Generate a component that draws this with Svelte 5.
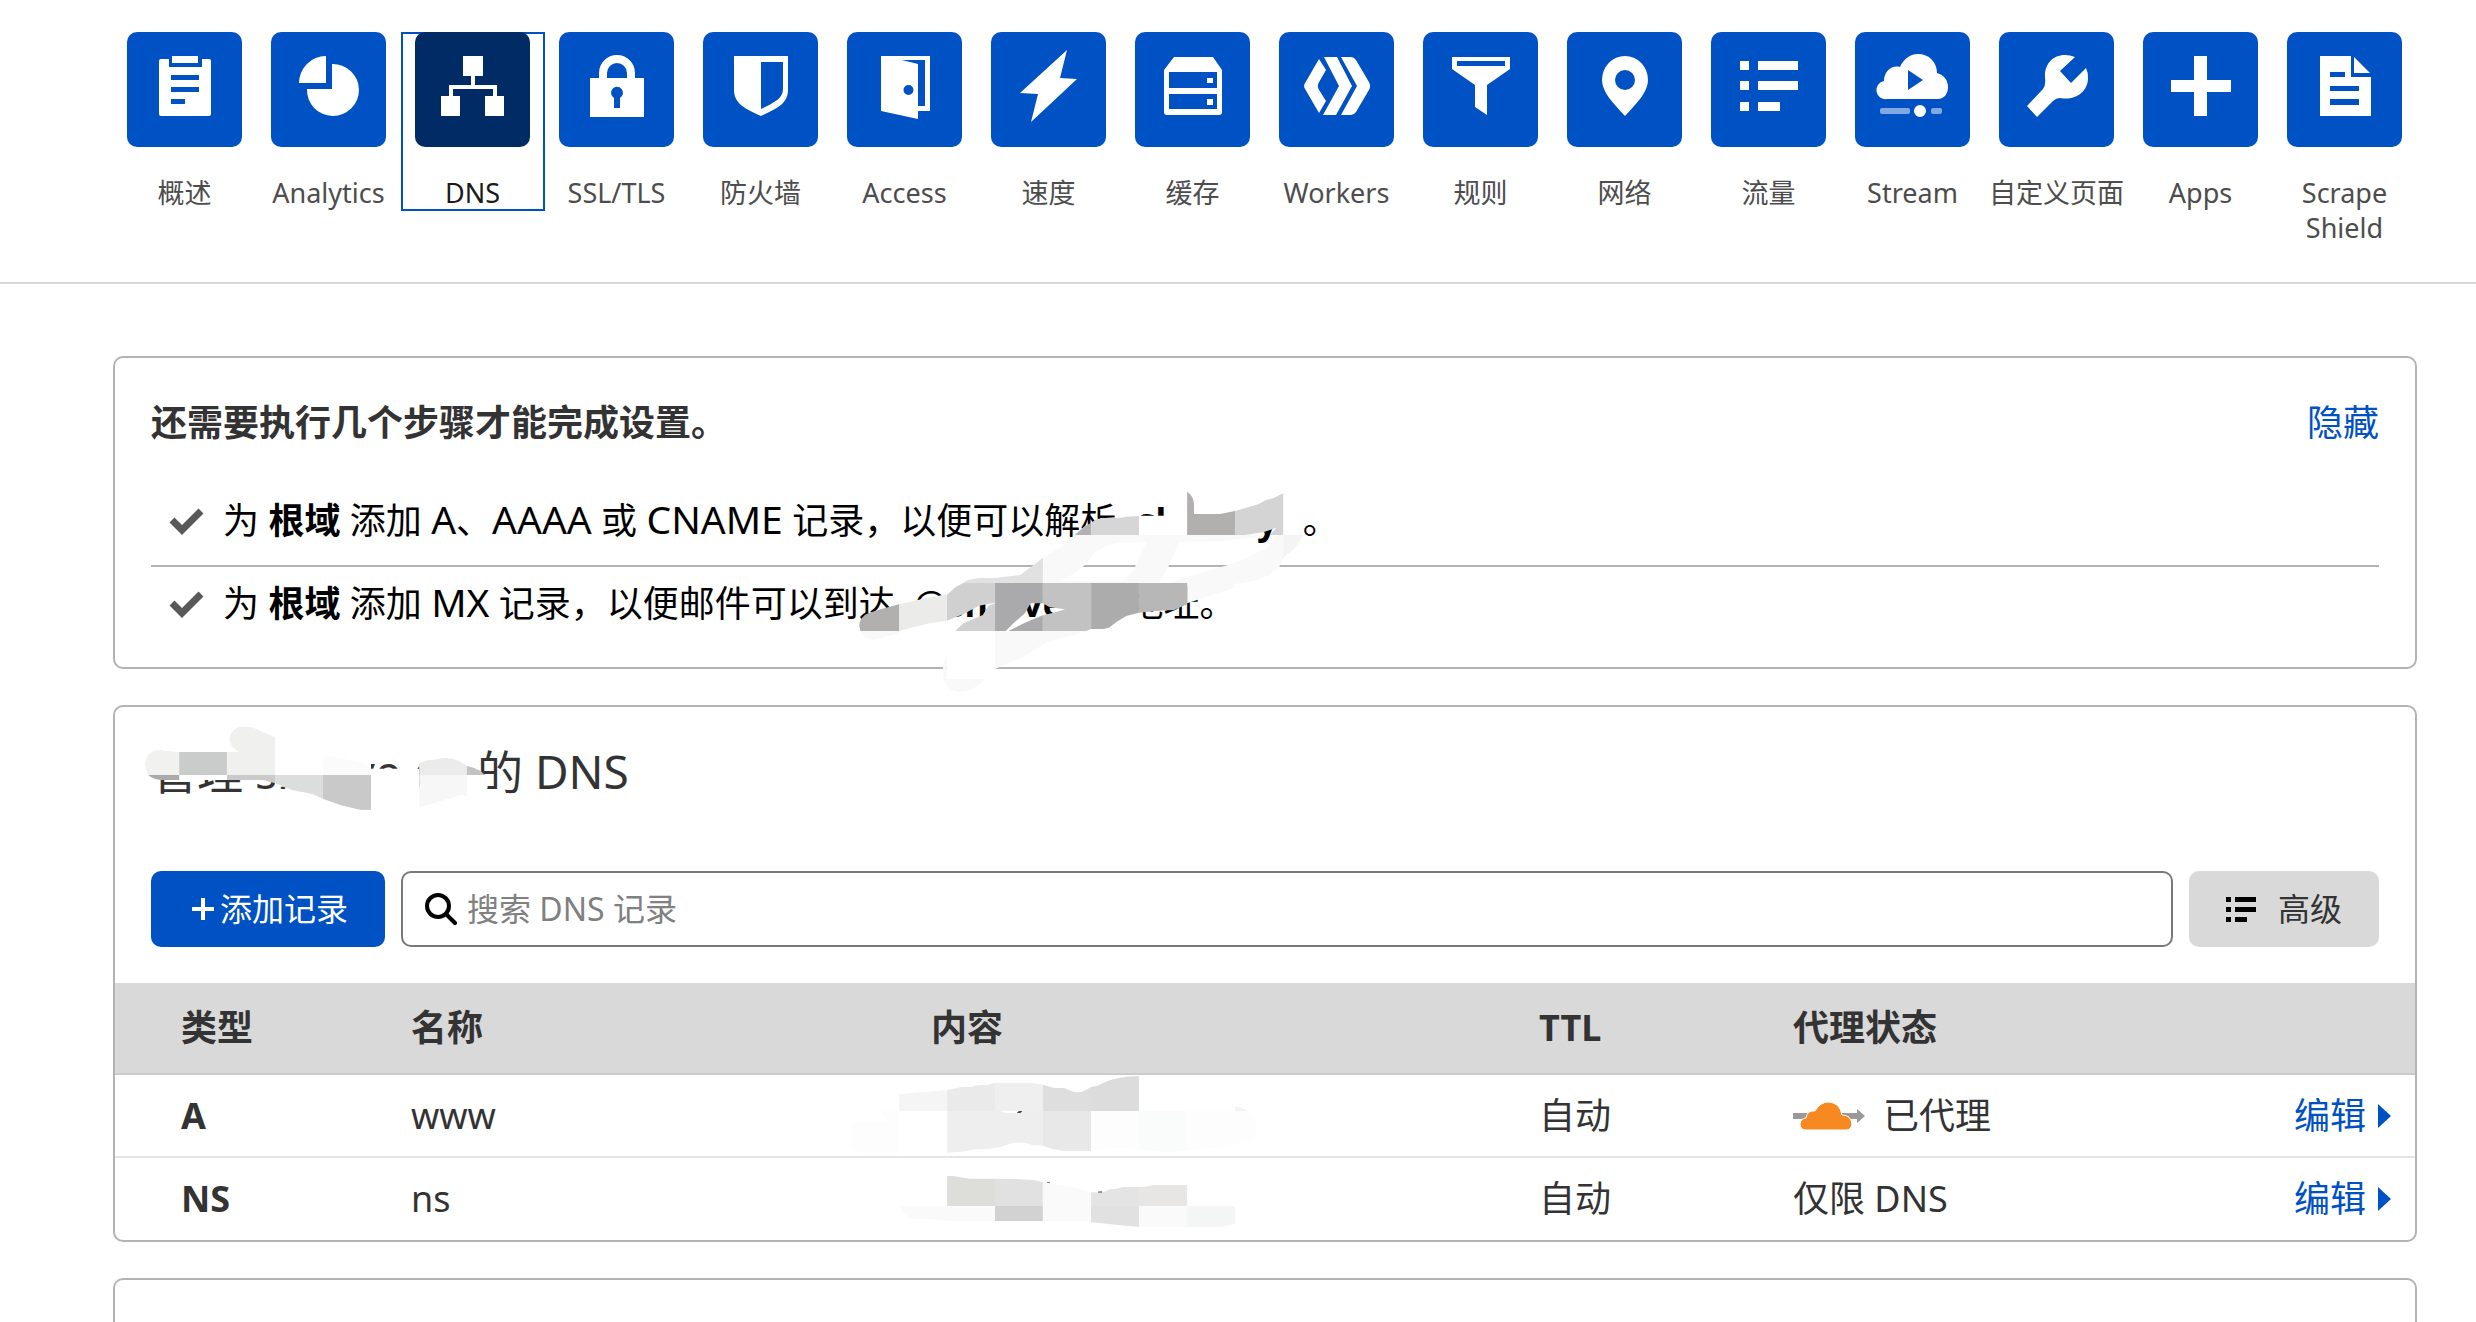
<script>
  const tabs = [
    { id: 'overview', label: '概述' },
    { id: 'analytics', label: 'Analytics' },
    { id: 'dns', label: 'DNS' },
    { id: 'ssl', label: 'SSL/TLS' },
    { id: 'firewall', label: '防火墙' },
    { id: 'access', label: 'Access' },
    { id: 'speed', label: '速度' },
    { id: 'caching', label: '缓存' },
    { id: 'workers', label: 'Workers' },
    { id: 'rules', label: '规则' },
    { id: 'network', label: '网络' },
    { id: 'traffic', label: '流量' },
    { id: 'stream', label: 'Stream' },
    { id: 'pages', label: '自定义页面' },
    { id: 'apps', label: 'Apps' },
    { id: 'scrape', label: 'Scrape Shield' }
  ];
  const icons = {
    overview: 'M34 27H42V35H75V27H82Q84 27 84 29V82Q84 84 82 84H34Q32 84 32 82V29Q32 27 34 27ZM45 24H71V31H45ZM44 43V48H72V43ZM44 55V60H72V55ZM44 67V72H58V67Z',
    analytics: 'M55 24A27 27 0 0 0 28 51H55ZM61 32A26 26 0 1 1 36 57H61Z',
    dns: 'M48 24H68V44H60V53H82V64H89V84H70V64H78V57H38V64H45V84H26V64H34V53H56V44H48Z',
    ssl: 'M31 46H40V41A18 18 0 0 1 76 41V46H85V85H31ZM48 46H68V41A10 10 0 0 0 48 41ZM55 66V76H61V66A6 6 0 1 0 55 66Z',
    firewall: 'M31 24H85V58C85 72 73 77 58 84C43 77 31 72 31 58ZM58 30V77C70 71 80 67 80 57V30Z',
    access: 'M34 24H83V79H71V87L34 79ZM55 28L71 32V74H78V28ZM61.5 53A5 5 0 1 0 61.5 63A5 5 0 1 0 61.5 53Z',
    speed: 'M76 18L69 46L86 47L40 90L47 62L29 61Z',
    caching: 'M39 25H78L87 38V80Q87 83 84 83H32Q29 83 29 80V38ZM34 40V56H82V40ZM34 62V77H82V62ZM72 46H78V51H72ZM72 67H78V73H72Z',
    workers: 'M40 27L47 38L39.5 51Q38 54 39.5 57L47 69L40 81L25.500 56Q24.500 54 25.500 52ZM45 25H58L73 54L57 83H44L60 54ZM62 25H72Q75 25 77 28L90.500 51Q92 54 90.500 57L77 80Q75 83 72 83H62L78 54Z',
    rules: 'M29 25H87V37L64 53V83L52 75V53L29 37ZM34 29V34H82V29Z',
    network: 'M58 24A23 24 0 0 0 35 48C35 60 46 71 58 84C70 71 81 60 81 48A23 24 0 0 0 58 24ZM58 38A10 10 0 1 1 58 58A10 10 0 1 1 58 38Z',
    traffic: 'M29 29H38V38H29ZM47 29H87V38H47ZM29 49H38V58H29ZM47 49H87V58H47ZM29 70H38V79H29ZM47 70H69V79H47Z',
    stream: 'M32 67A9 9 0 0 1 29 49C29 39 37 33 45 35C49 26 56 22 63 22C74 22 82 30 82 41C89 43 93 48 93 55C93 62 89 67 83 67ZM53 38V58L68 48ZM65 73A6 6 0 1 0 65 85A6 6 0 1 0 65 73Z',
    pages: 'M28 74L38 85L54 69Q57 66 61 66C76 69 89 60 89 46Q89 40 87 36L72 51L61 39L76 25Q71 23 66 23C53 23 45 33 46 46Q47 53 44 57Z',
    apps: 'M51 24H64V48H88V60H64V84H51V60H28V48H51Z',
    scrape: 'M33 24H64V45H84V84H33ZM67 25L83 41H67ZM43 40V45H58V40ZM43 54V59H72V54ZM43 67V73H72V67Z'
  };
  const records = [
    { type: 'A', name: 'www', ttl: '自动', proxied: true },
    { type: 'NS', name: 'ns', ttl: '自动', proxied: false }
  ];
  let query = $state('');
</script>

{#snippet check()}
  <svg class="check" viewBox="0 0 36 28" aria-hidden="true"><path d="M3 13L13 23L32 4" /></svg>
{/snippet}

{#snippet list()}
  <svg class="list" viewBox="0 0 30 26" aria-hidden="true"><path d="M0 1H5V6H0ZM9 1H30V6H9ZM0 11H5V16H0ZM9 11H30V16H9ZM0 21H5V26H0ZM9 21H21V26H9Z" /></svg>
{/snippet}

<header>
  <nav aria-label="域">
    <ul class="tabs">
      {#each tabs as tab (tab.id)}
        <li>
          <a href="#{tab.id}" class:active={tab.id === 'dns'} aria-current={tab.id === 'dns' ? 'page' : undefined}>
            <span class="tile">
              <svg viewBox="0 0 115 115" aria-hidden="true">
                <path d={icons[tab.id]} fill-rule="evenodd" />
                {#if tab.id === 'stream'}
                  <rect class="track" x="25" y="76" width="30" height="6" rx="2" />
                  <rect class="track" x="76" y="76" width="11" height="6" rx="2" />
                {/if}
              </svg>
            </span>
            <span class="label">{tab.label}</span>
          </a>
        </li>
      {/each}
    </ul>
  </nav>
</header>

<main>
  <section class="card setup">
    <div class="setup-head">
      <h2>还需要执行几个步骤才能完成设置。</h2>
      <a href="#hide">隐藏</a>
    </div>
    <ul class="steps">
      <li>
        {@render check()}
        <span>为 <b>根域</b> 添加 <span class="record-type">A</span>、<span class="record-type">AAAA</span> 或 <span class="record-type">CNAME</span> 记录，以便可以解析 <b class="host"><i>sl</i><i>y</i></b> 。</span>
      </li>
      <li>
        {@render check()}
        <span>为 <b>根域</b> 添加 <span class="record-type">MX</span> 记录，以便邮件可以到达 <span class="mail"><i>@<b>sh</b></i><b>ve</b></span> 地址。</span>
      </li>
    </ul>
    <svg class="smudge smudge-steps" viewBox="0 0 1568 780" preserveAspectRatio="none" aria-hidden="true">
      <path fill="#fff" d="M770 225L795 200L850 174L938 167H1064V225H1230L1297 203L1262 203L1240 165H1064V225ZM1064 130H1082V170H1064ZM436 513H562V657H436ZM745 400H905V470L860 503H745Z" />
      <path fill="#f9f9f9" fill-rule="evenodd" d="M770 225H1255V232H1290L1297 225H1367L1358 245L1345 265L1315 293L1305 320L1280 345L1240 362L1189 372V383L1064 430V369H687V293L735 260ZM850 258L885 248L958 247L928 320L900 362H735L770 340L800 312L825 275ZM1043 247L1150 244L1210 236L1255 232H1285L1290 240L1275 262L1220 293L1165 317L1080 345L1020 366L990 371L1015 320Z" />
      <path fill="#b2b2b2" d="M770 225L795 200L813 188V225Z" />
      <path fill="#d6d6d6" d="M813 188L828 177L850 174L890 173L905 170L938 168V225H813Z" />
      <path fill="#b1b0ae" d="M1064 95Q1082 108 1082 135V162H1150L1189 153V225H1064Z" />
      <path fill="#d4d4d4" d="M1189 153L1250 133L1270 120L1290 114L1315 100V225H1280L1297 203L1265 216L1215 225H1189Z" />
      <path fill="#f4f4f4" d="M1315 225H1367L1345 265L1315 293Z" />
      <path fill="#e1e1e1" d="M470 375L490 360L520 354H560L628 345L655 322L687 293V369Z" />
      <path fill="#d0d0d0" d="M436 405L460 380L480 369H562V428L520 437L480 462L436 482ZM458 513L480 490L530 465L545 437L562 430V513Z" />
      <path fill="#aaaaac" d="M562 369H687V430L655 430L640 460L610 490L590 513H562ZM597 513L640 488L687 466V513Z" />
      <path fill="#c2c2c2" d="M687 369H813V507L800 513H687V466L715 458L745 448L705 442L687 430Z" />
      <path fill="#acacac" d="M813 369H938V458L905 468L880 485L860 503L845 507H813Z" />
      <path fill="#b7b7b7" d="M938 369H1064V433L1030 450L990 452L938 458Z" />
      <path fill="#b1b0ae" d="M210 513Q200 485 222 465Q230 457 311 433V513Z" />
      <path fill="#ebebea" d="M311 433L380 415L436 403V482L390 490L311 513Z" />
      <path fill="#f9f9f9" d="M210 513H311V520L245 540Q220 538 210 513ZM562 513H800L770 525L700 545L640 588L562 627ZM436 580Q420 625 429 664Q440 695 470 695Q505 694 537 657H436Z" />
    </svg>
  </section>

  <section class="card records">
    <h1>管理 <span class="zone"><i>sh</i><i>ve c</i></span> 的 DNS</h1>
    <svg class="smudge smudge-title" viewBox="0 90 1568 300" preserveAspectRatio="none" aria-hidden="true">
      <path fill="#fff" d="M140 170H640V222H664V236H782V320H664V290H429V270H150L118 255ZM899 228L943 255L950 290L945 312H899Z" />
      <path fill="#f1f1f0" d="M194 186V255H118Q104 225 115 200Q130 174 160 182Z" />
      <path fill="#aaa" d="M118 255H194V270H150Q130 268 118 255Z" />
      <path fill="#cacbcb" d="M194 186H311V255H194Z" />
      <path fill="#f0f0ee" d="M311 186H340Q318 170 318 147Q320 120 340 111H372L429 142V255H311Z" />
      <path fill="#c9cac9" d="M311 255H429V280L400 270H311Z" />
      <path fill="#dcdedd" d="M429 255H546V326L520 312L470 300L429 280Z" />
      <path fill="#c9c9c9" d="M546 255H664V360H640L590 346L546 326Z" />
      <path fill="#fbfbfb" d="M546 195L640 216L664 236V255H546Z" />
      <path fill="#ebebeb" d="M782 220Q800 208 820 209Q850 197 880 213L899 228V255H782Z" />
      <path fill="#c3c3c3" d="M899 228Q930 236 943 255H899Z" />
      <path fill="#f7f7f7" d="M782 255H899V318L885 315L782 352Z" />
    </svg>

    <div class="toolbar">
      <button type="button" class="add">
        <svg viewBox="0 0 22 22" aria-hidden="true"><path d="M9 0H13V9H22V13H13V22H9V13H0V9H9Z" /></svg>
        添加记录
      </button>
      <label class="search">
        <svg viewBox="0 0 32 32" aria-hidden="true"><circle cx="13" cy="13" r="11" /><path d="M21 21L30 30" /></svg>
        <input type="text" placeholder="搜索 DNS 记录" aria-label="搜索 DNS 记录" bind:value={query} />
      </label>
      <button type="button" class="advanced">
        {@render list()}
        高级
      </button>
    </div>

    <table>
      <thead>
        <tr>
          <th scope="col" class="c-type">类型</th>
          <th scope="col" class="c-name">名称</th>
          <th scope="col" class="c-content">内容</th>
          <th scope="col" class="c-ttl">TTL</th>
          <th scope="col" class="c-status">代理状态</th>
          <th scope="col" class="c-edit" aria-label="操作"></th>
        </tr>
      </thead>
      <tbody>
        {#each records as record, i (record.type)}
          <tr>
            <th scope="row" class="c-type">{record.type}</th>
            <td>{record.name}</td>
            <td class="c-content">
              {#if i === 0}
                <svg class="smudge smudge-row" viewBox="0 345 1568 243" preserveAspectRatio="none" aria-hidden="true">
                  <path fill="#f5f5f5" d="M193 403L328 390V453H193Z" />
                  <path fill="#eaeaea" d="M328 390L370 381H395L415 375H440L462 369V453H328Z" />
                  <path fill="#efefef" d="M462 369H565L596 374V453H462Z" />
                  <path fill="#dedede" d="M596 374L628 384H655L675 393Q700 402 715 391L731 381V453H596Z" />
                  <path fill="#dcdcdc" d="M731 381L750 377Q790 350 865 348V453H731Z" />
                  <path fill="#eee" d="M328 453H596V557L565 554L545 548H513L480 560L450 566L410 568L370 575L328 578Z" />
                  <path fill="#e8e8e8" d="M596 453H731V573H655Q625 570 596 557Z" />
                  <path fill="#fdfdfd" d="M58 493L75 485H160L145 453H193V578H105L58 570ZM731 453H865V567L800 563L731 572ZM1000 453H1170Q1200 480 1200 505Q1200 545 1140 553L1080 563L1000 570Z" />
                  <path fill="#fafcfb" d="M865 453H1000V571L945 577L865 568Z" />
                  <path fill="#f2f2f2" d="M1134 441Q1155 442 1170 453H1134Z" />
                  <path fill="#fff" d="M475 453H545L525 459H490Z" />
                  <path fill="#444" d="M523 459L529 453H539L533 459Z" />
                </svg>
              {:else}
                <svg class="smudge smudge-row" viewBox="0 597 1568 243" preserveAspectRatio="none" aria-hidden="true">
                  <path fill="#ddddda" d="M328 651H345L390 659H462V741H328Z" />
                  <path fill="#e1e1e1" d="M462 659L525 660L575 664L596 670V741H462Z" />
                  <path fill="#fafafa" d="M596 670L635 677L680 684L731 700V788L710 786H596ZM196 741H462V786H328L290 780H230Q205 772 196 741ZM865 741H1000V804H865Z" />
                  <path fill="#e4e4e4" d="M731 700L765 700L785 690H800L820 684H865V741H731Z" />
                  <path fill="#e7e6e4" d="M865 684H880L905 678H1000V741H865Z" />
                  <path fill="#d2d2d2" d="M462 741H596V786H462Z" />
                  <path fill="#e1e1e1" d="M731 741H865V804L731 790Z" />
                  <path fill="#f4f6f5" d="M1000 741H1134V795L1095 804H1000Z" />
                  <path fill="#777" d="M608 669H616V672H608ZM752 697H762V701H750Z" />
                </svg>
              {/if}
            </td>
            <td class="c-ttl">{record.ttl}</td>
            <td>
              {#if record.proxied}
                <span class="status">
                  <svg class="cloud" viewBox="0 0 72 28" aria-hidden="true">
                    <path fill="#999" d="M0 11H64V7L72 14L64 21V17H0Z" />
                    <path fill="#f6891f" stroke="#fff" d="M12 28Q7 27 7 22Q8 16 13 16Q14 8 22 9Q27 0 36 0Q47 1 49 13Q58 13 59 22Q58 28 53 28Z" />
                  </svg>
                  已代理
                </span>
              {:else}
                仅限 DNS
              {/if}
            </td>
            <td class="c-edit">
              <a href="#edit-{record.name}">编辑<svg viewBox="0 0 13 24" aria-hidden="true"><path d="M0 0L13 12L0 24Z" /></svg></a>
            </td>
          </tr>
        {/each}
      </tbody>
    </table>
  </section>

  <section class="card next" aria-label="名称服务器"></section>
</main>

<style>
  :global(body) {
    margin: 0;
    background: #fff;
    color: #333;
    font-family: 'Noto Sans', 'Noto Sans CJK SC', sans-serif;
    font-size: 36px;
    line-height: 54px;
  }
  ul {
    list-style: none;
    margin: 0;
    padding: 0;
  }
  i {
    font-style: normal;
  }
  a {
    color: #0051c3;
    text-decoration: none;
  }
  header {
    padding: 32px 59px 36px 113px;
    border-bottom: 2px solid #d9d9d9;
  }
  .tabs {
    display: grid;
    grid-template-columns: repeat(16, 1fr);
    align-items: start;
  }
  .tabs a {
    display: flex;
    flex-direction: column;
    align-items: center;
    gap: 28px;
    padding: 0 1px 1px 0;
    color: #4d4d4d;
    font-size: 27px;
    line-height: 35px;
    text-align: center;
  }
  .tile {
    display: block;
    width: 115px;
    height: 115px;
    border-radius: 10px;
    background: #0051c3;
  }
  .tile svg {
    display: block;
    fill: #fff;
  }
  .track {
    opacity: 0.5;
  }
  .label {
    max-width: 140px;
  }
  .tabs .active {
    color: #1a1a1a;
    box-shadow: inset 0 0 0 2px #0051c3;
  }
  .active .tile {
    background: #012b64;
  }
  main {
    display: flex;
    flex-direction: column;
    gap: 36px;
    padding: 72px 59px 0 113px;
  }
  .card {
    position: relative;
    border: 2px solid #b3b3b3;
    border-radius: 10px;
  }
  .setup {
    padding: 38px 36px 19px;
  }
  .setup-head {
    display: flex;
    justify-content: space-between;
    margin-bottom: 34px;
  }
  h2 {
    margin: 0;
    font-size: 36px;
    font-weight: 700;
  }
  .steps li {
    display: flex;
    align-items: center;
    gap: 18px;
    padding: 10px 0 17px 18px;
    color: #000;
    white-space: nowrap;
  }
  .steps li + li {
    border-top: 2px solid #b3b3b3;
  }
  .record-type {
    font-size: 39px;
    line-height: 36px;
  }
  .check {
    width: 36px;
    height: 28px;
    fill: none;
    stroke: #595959;
    stroke-width: 7;
  }
  .host,
  .mail,
  .zone {
    display: inline-flex;
    justify-content: space-between;
  }
  .host {
    width: 140px;
    margin: 0 16px 0 12px;
  }
  .mail {
    width: 150px;
    margin: 0 54px 0 10px;
  }
  .zone {
    width: 180px;
    margin-right: 30px;
  }
  .smudge {
    position: absolute;
    pointer-events: none;
  }
  .smudge-steps {
    left: 665px;
    top: 102px;
    width: 600px;
    height: 260px;
    z-index: 1;
  }
  .smudge-title {
    left: -15px;
    top: 13px;
    width: 640px;
    height: 100px;
  }
  .smudge-row {
    left: -101px;
    top: 0;
    width: 560px;
    height: 81px;
  }
  h1 {
    margin: 0;
    padding: 36px 36px 72px;
    font-size: 46px;
    font-weight: 400;
    line-height: 56px;
    white-space: nowrap;
  }
  .toolbar {
    display: flex;
    gap: 16px;
    padding: 0 36px 36px;
  }
  button,
  input {
    font: inherit;
  }
  button,
  .search {
    display: flex;
    align-items: center;
    box-sizing: border-box;
    height: 76px;
    border-radius: 10px;
    font-size: 32px;
  }
  button {
    justify-content: center;
    flex: none;
    border: 0;
    padding: 0;
  }
  .add {
    gap: 6px;
    width: 234px;
    padding-left: 4px;
    background: #0051c3;
    color: #fff;
  }
  .add svg {
    width: 22px;
    height: 22px;
    fill: #fff;
  }
  .search {
    flex: 1;
    gap: 10px;
    padding: 0 22px;
    border: 2px solid #797979;
  }
  .search svg {
    flex: none;
    width: 32px;
    height: 32px;
    fill: none;
    stroke: #000;
    stroke-width: 4;
    stroke-linecap: round;
  }
  input {
    flex: 1;
    min-width: 0;
    border: 0;
    padding: 0;
    outline: 0;
    background: none;
    color: #333;
  }
  input::placeholder {
    color: #808080;
    opacity: 1;
  }
  .advanced {
    gap: 22px;
    width: 190px;
    background: #d9d9d9;
    color: #333;
  }
  .list {
    width: 30px;
    height: 26px;
    fill: #000;
  }
  table {
    width: 100%;
    table-layout: fixed;
    border-collapse: separate;
    border-spacing: 0;
  }
  th,
  td {
    box-sizing: border-box;
    height: 82px;
    padding: 0;
    text-align: left;
    white-space: nowrap;
  }
  thead th {
    height: 92px;
    background: #d9d9d9;
    border-bottom: 2px solid #cbcbcb;
  }
  tbody tr:not(:last-child) > * {
    height: 83px;
    border-bottom: 2px solid #e5e5e5;
  }
  .c-type {
    width: 296px;
    padding-left: 66px;
  }
  .c-name {
    width: 520px;
  }
  .c-content {
    position: relative;
  }
  .c-ttl {
    width: 254px;
  }
  .c-status {
    width: 438px;
  }
  .c-edit {
    width: 184px;
    padding-right: 24px;
    text-align: right;
  }
  .c-edit a {
    display: inline-flex;
    align-items: center;
    gap: 12px;
  }
  .c-edit svg {
    width: 13px;
    height: 24px;
    fill: #0051c3;
  }
  .status {
    display: flex;
    align-items: center;
    gap: 18px;
  }
  .cloud {
    width: 72px;
    height: 28px;
    overflow: visible;
  }
  .next {
    height: 42px;
    border-bottom: 0;
    border-radius: 10px 10px 0 0;
  }
</style>
